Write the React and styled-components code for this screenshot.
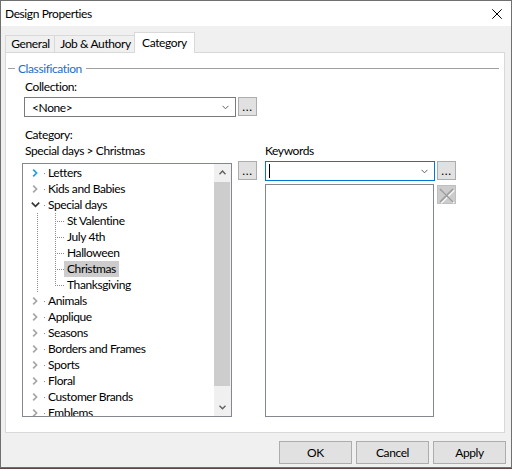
import styled, { createGlobalStyle } from "styled-components";

const GlobalStyle = createGlobalStyle`
  html, body {
    margin: 0;
    padding: 0;
    background: #5e4844;
  }
  body {
    font-family: "Segoe UI", Lato, "Noto Sans", sans-serif;
    font-size: 12px;
    letter-spacing: -0.4px;
    color: #000;
  }
  * {
    box-sizing: border-box;
  }
`;

const Window = styled.div`
  width: 512px;
  height: 468px;
  border: 1px solid #707070;
  background: #f0f0f0;
  display: flex;
  flex-direction: column;
`;

const TitleBar = styled.div`
  height: 25px;
  flex: none;
  background: #fff;
  display: flex;
  align-items: center;
  justify-content: space-between;
  padding: 0 9px 0 4px;
`;

const Body = styled.div`
  flex: 1;
  display: flex;
  flex-direction: column;
  padding: 6px 5px 3px 4px;
`;

const TabStrip = styled.div`
  height: 20px;
  display: flex;
  align-items: flex-end;
  padding-left: 1px;
`;

const Tab = styled.div`
  width: ${(p) => p.$w}px;
  height: ${(p) => (p.$active ? 21 : 17)}px;
  line-height: ${(p) => (p.$active ? 19 : 16)}px;
  text-align: center;
  white-space: nowrap;
  border: 1px solid #d9d9d9;
  border-bottom: none;
  background: ${(p) => (p.$active ? "#fff" : "#f0f0f0")};
  margin: 0 ${(p) => (p.$active ? -2 : -1)}px
    ${(p) => (p.$active ? -1 : 0)}px;
  position: relative;
  z-index: ${(p) => (p.$active ? 2 : 1)};
`;

const Panel = styled.div`
  width: 500px;
  height: 381px;
  border: 1px solid #d9d9d9;
  background: #fff;
  display: flex;
  flex-direction: column;
`;

const GroupHeader = styled.div`
  height: 16px;
  margin: 7px 5px 0 2px;
  display: flex;
  align-items: center;
  gap: 3px;
  color: #1c6cd0;
  &::before {
    content: "";
    width: 7px;
    border-top: 1px solid #a0a0a0;
  }
  &::after {
    content: "";
    flex: 1;
    margin-left: 1px;
    border-top: 1px solid #a0a0a0;
  }
`;

const Content = styled.div`
  padding-left: 16px;
  display: flex;
  flex-direction: column;
`;

const Label = styled.div`
  height: 16px;
  line-height: 16px;
  padding-left: ${(p) => p.$indent ?? 3}px;
  margin-top: ${(p) => p.$top ?? 0}px;
  white-space: nowrap;
`;

const Row = styled.div`
  display: flex;
  align-items: flex-start;
  gap: ${(p) => p.$gap ?? 2}px;
  margin-top: ${(p) => p.$top ?? 0}px;
  margin-left: ${(p) => p.$left ?? 0}px;
`;

const Combo = styled.div`
  width: ${(p) => p.$w}px;
  height: 20px;
  border: 1px solid ${(p) => (p.$focus ? "#0078d7" : "#7a7a7a")};
  background: #fff;
  display: flex;
  align-items: center;
  justify-content: space-between;
  padding: 0 6px 0 ${(p) => (p.$focus ? 3 : 7)}px;
`;

const Caret = styled.span`
  width: 1px;
  height: 14px;
  background: #000;
`;

const SmallButton = styled.div`
  width: 19px;
  height: 19px;
  flex: none;
  border: 1px solid ${(p) => (p.$disabled ? "#bfbfbf" : "#adadad")};
  background: ${(p) => (p.$disabled ? "#cccccc" : "#e1e1e1")};
  display: flex;
  align-items: center;
  justify-content: center;
  line-height: 14px;
  padding-top: 1px;
  margin-top: ${(p) => p.$top ?? 0}px;
  margin-left: ${(p) => p.$left ?? 0}px;
  letter-spacing: 0.6px;
`;

const Lower = styled.div`
  display: flex;
  align-items: flex-start;
`;

const Column = styled.div`
  display: flex;
  flex-direction: column;
  margin-left: ${(p) => p.$left ?? 0}px;
`;

const Tree = styled.div`
  width: 210px;
  height: 254px;
  margin-top: 4px;
  border: 1px solid #828790;
  background: #fff;
  display: flex;
`;

const TreeList = styled.div`
  flex: 1;
  overflow: hidden;
  padding-top: 1px;
`;

const TreeRow = styled.div`
  height: 16px;
  display: flex;
  align-items: stretch;
  padding-left: ${(p) => (p.$child ? 14 : 8)}px;
  white-space: nowrap;
`;

const Twisty = styled.span`
  width: 9px;
  display: flex;
  align-items: stretch;
`;

const Connector = styled.span`
  width: 5px;
  background: linear-gradient(#8c8c8c, #8c8c8c) no-repeat right 8px / 1px 1px;
`;

const Guide = styled.span`
  width: 18px;
  background: repeating-linear-gradient(
      to bottom,
      #8c8c8c 0 1px,
      transparent 1px 2px
    )
    no-repeat left top / 1px 100%;
`;

const Stem = styled.span`
  width: 9px;
  background: repeating-linear-gradient(
        to bottom,
        #8c8c8c 0 1px,
        transparent 1px 2px
      )
      no-repeat left top / 1px ${(p) => (p.$last ? "9px" : "100%")},
    repeating-linear-gradient(to right, #8c8c8c 0 1px, transparent 1px 2px)
      no-repeat left 8px / 100% 1px;
`;

const ItemText = styled.span`
  line-height: 16px;
  padding: 0 3px;
  background: ${(p) => (p.$selected ? "#cccccc" : "transparent")};
`;

const Scrollbar = styled.div`
  width: 17px;
  background: #f0f0f0;
  display: flex;
  flex-direction: column;
`;

const ScrollArrow = styled.div`
  height: 17px;
  display: flex;
  align-items: center;
  justify-content: center;
`;

const Track = styled.div`
  flex: 1;
  padding: 1px 1px 0 0;
`;

const Thumb = styled.div`
  height: 204px;
  background: #cdcdcd;
`;

const ListBox = styled.div`
  width: 169px;
  height: 233px;
  border: 1px solid #828790;
  background: #fff;
`;

const Footer = styled.div`
  margin-top: 8px;
  display: flex;
  justify-content: flex-end;
  gap: 4px;
`;

const DialogButton = styled.div`
  width: 73px;
  height: 23px;
  border: 1px solid #adadad;
  background: #e1e1e1;
  display: flex;
  align-items: center;
  justify-content: center;
`;

const Chevron = ({ up, down, color = "#606060", w = 7 }) => (
  <svg width={w} height="5" viewBox="0 0 7 5">
    {up ? (
      <polyline points="0.5,4.2 3.5,1 6.5,4.2" fill="none" stroke={color} strokeWidth="1.4" />
    ) : (
      <polyline points="0.5,0.8 3.5,3.8 6.5,0.8" fill="none" stroke={color} strokeWidth={down ? 1.4 : 1} />
    )}
  </svg>
);

const TwistyIcon = ({ open, hot }) => (
  <svg width="9" height="16" viewBox="0 0 9 16">
    {open ? (
      <polyline points="0.8,5.6 4.5,9.4 8.2,5.6" fill="none" stroke="#333" strokeWidth="1.6" />
    ) : (
      <polyline
        points="2.2,4.6 5.6,8 2.2,11.4"
        fill="none"
        stroke={hot ? "#1ea0e4" : "#a6a6a6"}
        strokeWidth="1.7"
      />
    )}
  </svg>
);

const rootsBefore = ["Letters", "Kids and Babies"];
const children = ["St Valentine", "July 4th", "Halloween", "Christmas", "Thanksgiving"];
const rootsAfter = [
  "Animals",
  "Applique",
  "Seasons",
  "Borders and Frames",
  "Sports",
  "Floral",
  "Customer Brands",
  "Emblems",
];

const RootItem = ({ name, open, hot }) => (
  <TreeRow>
    <Twisty>
      <TwistyIcon open={open} hot={hot} />
    </Twisty>
    <Connector />
    <ItemText>{name}</ItemText>
  </TreeRow>
);

export default function App() {
  return (
    <>
      <GlobalStyle />
      <Window>
        <TitleBar>
          <span>Design Properties</span>
          <svg width="10" height="10" viewBox="0 0 10 10">
            <path d="M0.3 0.3 L9.7 9.7 M9.7 0.3 L0.3 9.7" stroke="#000" strokeWidth="1" />
          </svg>
        </TitleBar>
        <Body>
          <TabStrip>
            <Tab $w={51}>General</Tab>
            <Tab $w={83}>Job &amp; Authory</Tab>
            <Tab $w={61} $active>
              Category
            </Tab>
          </TabStrip>
          <Panel>
            <GroupHeader>Classification</GroupHeader>
            <Content>
              <Label $top={3}>Collection:</Label>
              <Row $top={2} $left={2}>
                <Combo $w={212}>
                  <span>&lt;None&gt;</span>
                  <Chevron />
                </Combo>
                <SmallButton>...</SmallButton>
              </Row>
              <Label $top={10}>Category:</Label>
              <Lower>
                <Column>
                  <Label>Special days &gt; Christmas</Label>
                  <Tree>
                    <TreeList>
                      {rootsBefore.map((n, i) => (
                        <RootItem key={n} name={n} hot={i === 0} />
                      ))}
                      <RootItem name="Special days" open />
                      {children.map((n, i) => (
                        <TreeRow key={n} $child>
                          <Guide />
                          <Stem $last={i === children.length - 1} />
                          <ItemText $selected={n === "Christmas"}>{n}</ItemText>
                        </TreeRow>
                      ))}
                      {rootsAfter.map((n) => (
                        <RootItem key={n} name={n} />
                      ))}
                    </TreeList>
                    <Scrollbar>
                      <ScrollArrow>
                        <Chevron up />
                      </ScrollArrow>
                      <Track>
                        <Thumb />
                      </Track>
                      <ScrollArrow>
                        <Chevron down />
                      </ScrollArrow>
                    </Scrollbar>
                  </Tree>
                </Column>
                <SmallButton $top={18} $left={6}>
                  ...
                </SmallButton>
                <Column $left={8}>
                  <Label $indent={0}>Keywords</Label>
                  <Row $top={2}>
                    <Combo $w={170} $focus>
                      <Caret />
                      <Chevron />
                    </Combo>
                    <SmallButton>...</SmallButton>
                  </Row>
                  <Row $top={3} $gap={3}>
                    <ListBox />
                    <SmallButton $disabled $top={1}>
                      <svg width="17" height="17" viewBox="0 0 17 17">
                        <path d="M2.5 2.5 L15.5 15.5 M15.5 2.5 L2.5 15.5" stroke="#f4f4f4" strokeWidth="1.6" transform="translate(0.7,0.7)" />
                        <path d="M2 2 L15 15 M15 2 L2 15" stroke="#9c9c9c" strokeWidth="1.6" />
                      </svg>
                    </SmallButton>
                  </Row>
                </Column>
              </Lower>
            </Content>
          </Panel>
          <Footer>
            <DialogButton>OK</DialogButton>
            <DialogButton>Cancel</DialogButton>
            <DialogButton>Apply</DialogButton>
          </Footer>
        </Body>
      </Window>
    </>
  );
}
